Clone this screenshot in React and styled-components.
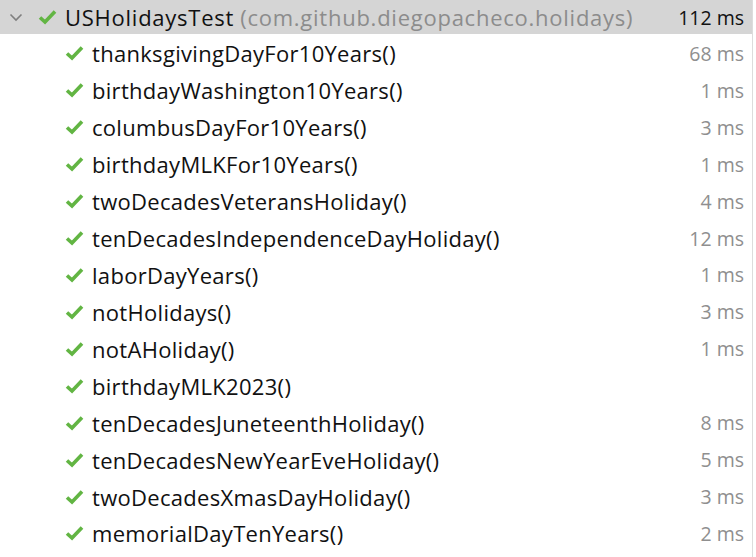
import React from 'react';
import styled, {createGlobalStyle} from 'styled-components';

const GlobalStyle = createGlobalStyle`
  html, body {
    margin: 0;
    padding: 0;
    background: #ffffff;
  }
  body {
    font-family: "Open Sans", "DejaVu Sans", sans-serif;
    overflow: hidden;
  }
`;

const Tree = styled.div`
  width: 752px;
  height: 557px;
  border-right: 1px solid #dcdcdc;
  background: #ffffff;
`;

const Row = styled.div`
  display: flex;
  align-items: center;
  height: ${p => (p.$selected ? '34px' : '36.93px')};
  margin-bottom: ${p => (p.$selected ? '1px' : '0')};
  padding-left: ${p => p.$indent}px;
  padding-right: 8px;
  background: ${p => (p.$selected ? '#d5d5d5' : 'transparent')};
  font-size: 22px;
  letter-spacing: ${p => (p.$selected ? '0.75px' : '0.3px')};
  white-space: nowrap;
`;

const Chevron = styled.span`
  display: flex;
  width: 28px;
  margin-right: 8px;
  justify-content: center;
`;

const Check = styled.span`
  display: flex;
  width: 19px;
  margin-right: 8px;
`;

const Name = styled.span`
  color: #111111;
`;

const Package = styled.span`
  color: #8c8c8c;
  margin-left: 6px;
`;

const Time = styled.span`
  margin-left: auto;
  color: ${p => (p.$dark ? '#111111' : '#8f8f8f')};
  font-size: 19.5px;
  letter-spacing: 0;
`;

const CheckIcon = () => (
  <svg width="19" height="16" viewBox="0 0 19 16">
    <path d="M2 8.5 L7 13 L17 2.5" fill="none" stroke="#62b543" strokeWidth="3.6" strokeLinejoin="miter" />
  </svg>
);

const ChevronIcon = () => (
  <svg width="14" height="9" viewBox="0 0 14 9">
    <path d="M1.5 1.5 L7 7 L12.5 1.5" fill="none" stroke="#7f7f7f" strokeWidth="1.6" />
  </svg>
);

const tests = [
  ['thanksgivingDayFor10Years()', '68 ms'],
  ['birthdayWashington10Years()', '1 ms'],
  ['columbusDayFor10Years()', '3 ms'],
  ['birthdayMLKFor10Years()', '1 ms'],
  ['twoDecadesVeteransHoliday()', '4 ms'],
  ['tenDecadesIndependenceDayHoliday()', '12 ms'],
  ['laborDayYears()', '1 ms'],
  ['notHolidays()', '3 ms'],
  ['notAHoliday()', '1 ms'],
  ['birthdayMLK2023()', ''],
  ['tenDecadesJuneteenthHoliday()', '8 ms'],
  ['tenDecadesNewYearEveHoliday()', '5 ms'],
  ['twoDecadesXmasDayHoliday()', '3 ms'],
  ['memorialDayTenYears()', '2 ms'],
];

export default function App() {
  return (
    <>
      <GlobalStyle />
      <Tree>
        <Row $indent={2} $selected>
          <Chevron><ChevronIcon /></Chevron>
          <Check><CheckIcon /></Check>
          <Name>USHolidaysTest</Name>
          <Package>(com.github.diegopacheco.holidays)</Package>
          <Time $dark>112 ms</Time>
        </Row>
        {tests.map(([name, time]) => (
          <Row key={name} $indent={65}>
            <Check><CheckIcon /></Check>
            <Name>{name}</Name>
            <Time>{time}</Time>
          </Row>
        ))}
      </Tree>
    </>
  );
}
